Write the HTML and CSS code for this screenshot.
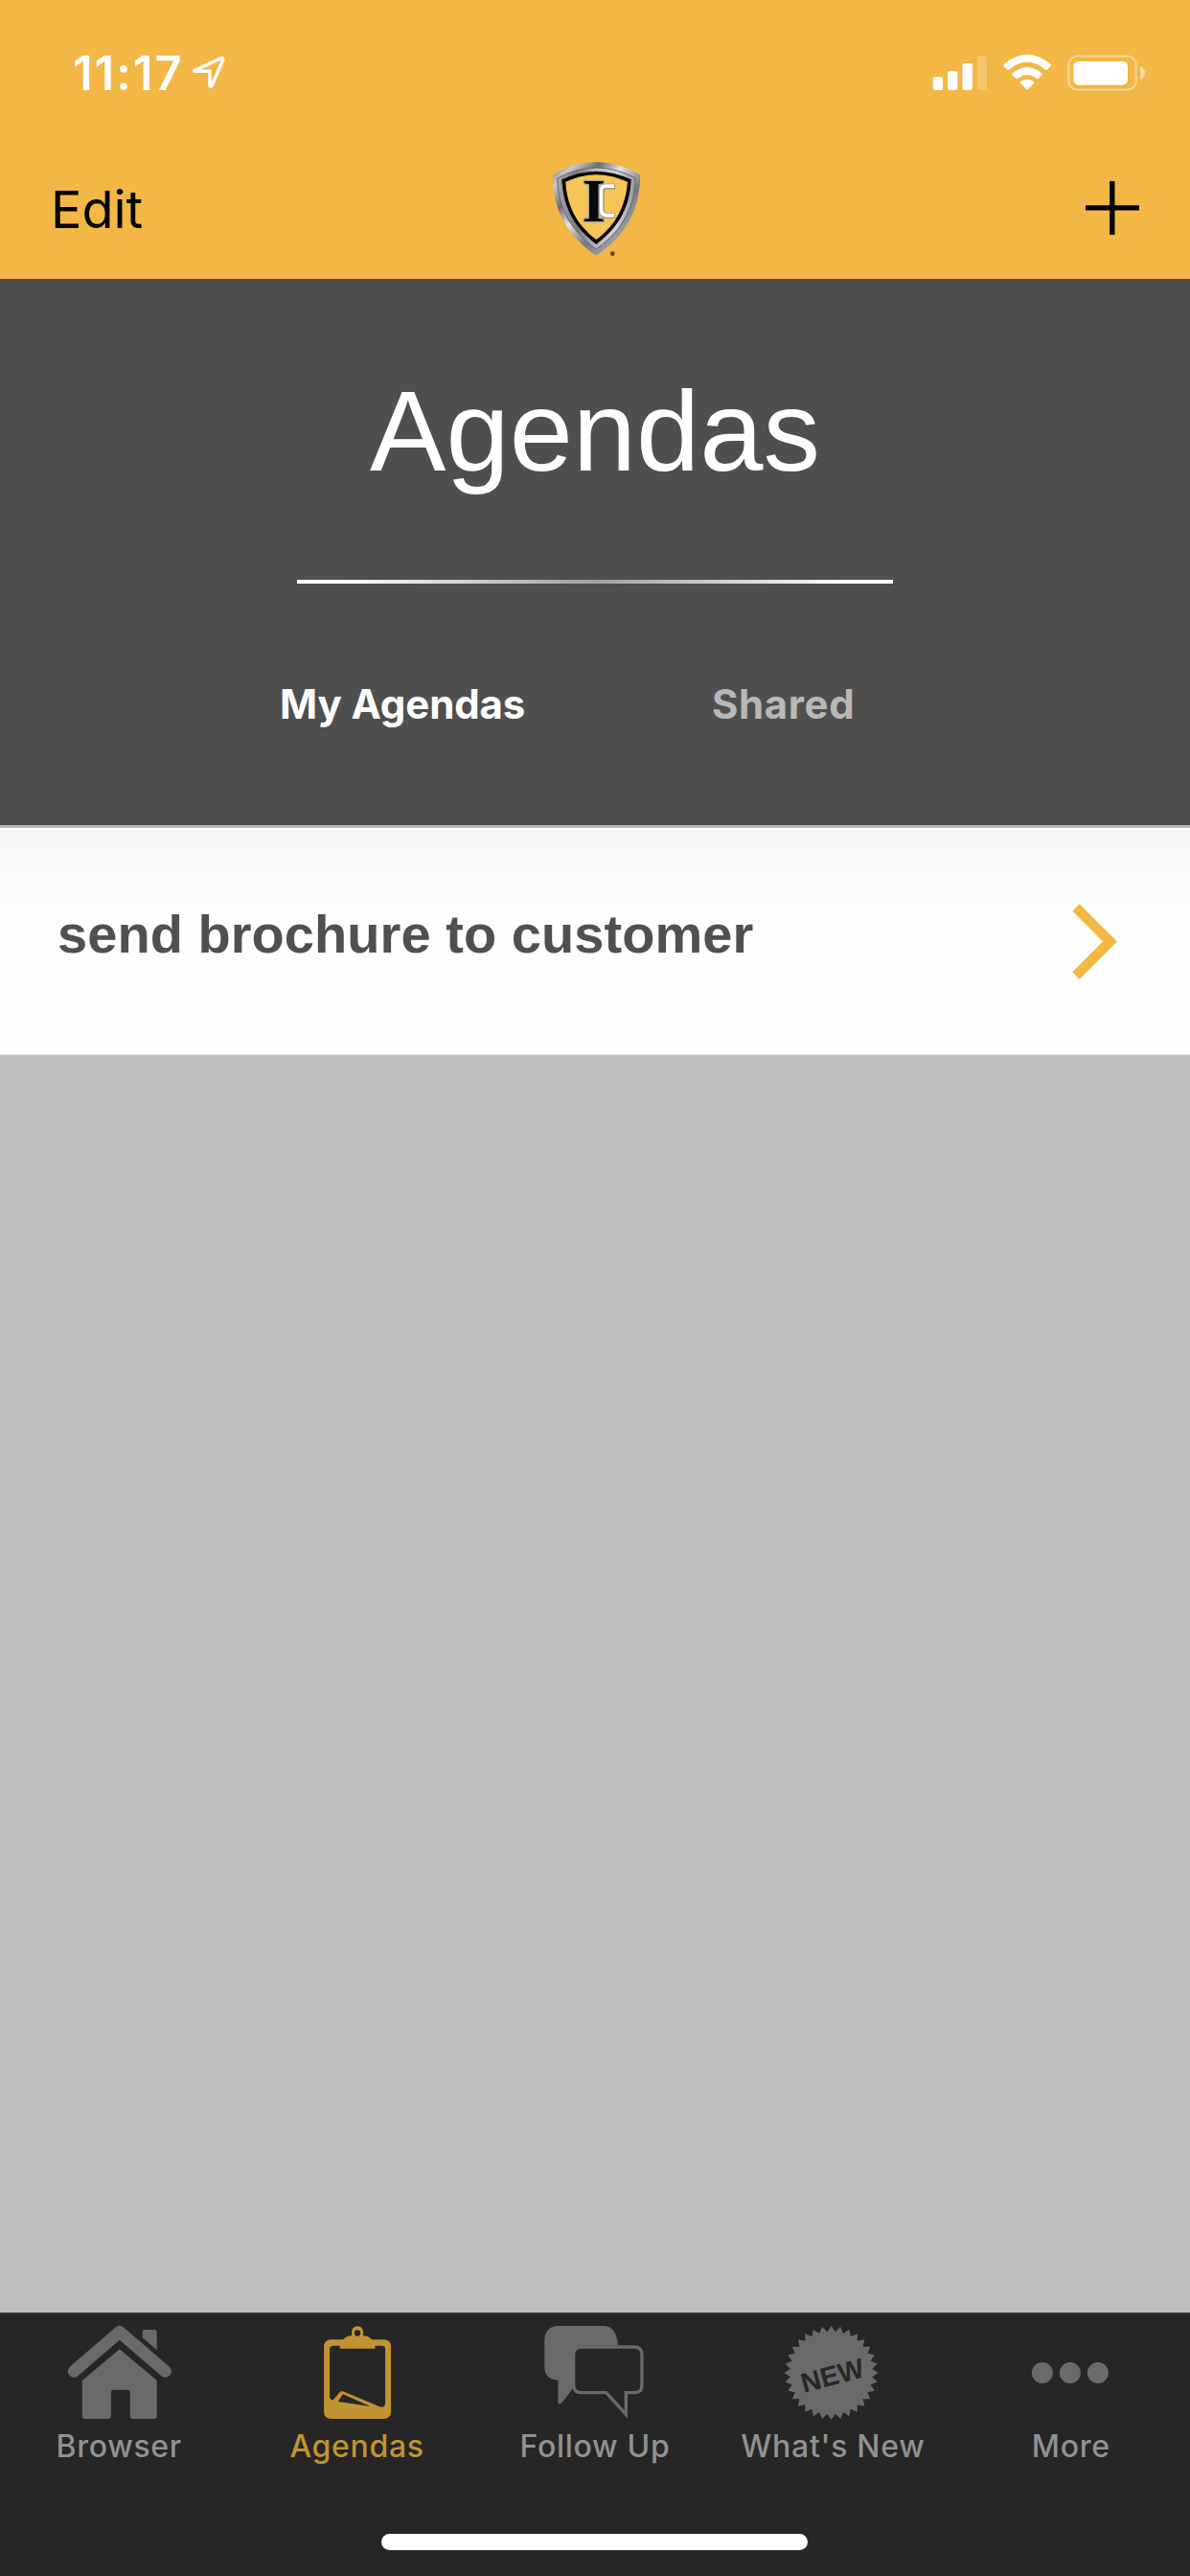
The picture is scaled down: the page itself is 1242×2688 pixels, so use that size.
FILE: index.html
```html
<!DOCTYPE html>
<html lang="en">
<head>
<meta charset="utf-8">
<title>Agendas</title>
<link rel="stylesheet" href="styles.css">
</head>
<body>
<div class="app">
  <header class="top">
    <div class="status">
      <div class="status-left">
        <span class="time">11:17</span>
        <svg class="location" width="34" height="36" viewBox="603 174 102 108"><path d="M609 221L693 182Q699 181 698 188L663 269Q659 274 657 268V223H612Q606 223 609 221Z" fill="none" stroke="#fff" stroke-width="10.500" stroke-linejoin="round"/></svg>
      </div>
      <div class="status-right">
        <svg width="57" height="40" viewBox="159 108 171 120" fill="#fff"><rect x="161" y="181" width="31" height="41" rx="8"/><rect x="207" y="162" width="31" height="60" rx="8"/><rect x="253" y="138" width="32" height="84" rx="8"/><rect x="300" y="115" width="30" height="107" rx="8" opacity=".22"/></svg>
        <svg class="wifi" width="52" height="40" viewBox="378 108 156 120" fill="#fff"><path d="M382 142Q456 79 530 142Q532 145 530 147L518 158Q516 160 513 158Q456 111 399 158Q396 160 394 158L382 147Q380 145 382 142Z"/><path d="M409 170Q456 130 503 170Q505 173 503 175L491 185Q488 188 485 185Q456 163 427 185Q424 188 421 185L409 175Q407 173 409 170Z"/><path d="M435 196Q456 181 477 196Q479 199 477 201L458 220Q456 222 454 220L435 201Q433 199 435 196Z"/></svg>
        <svg class="battery" width="83" height="40" viewBox="579 108 249 120" fill="#fff"><rect x="586" y="116" width="211" height="105" rx="27" fill="none" stroke="#fff" stroke-width="7" opacity=".4"/><rect x="601" y="132" width="170" height="74" rx="16"/><path d="M810 147Q825 154 825 168Q825 182 810 189Z" opacity=".5"/></svg>
      </div>
    </div>
    <nav class="nav">
      <a class="edit">Edit</a>
      <svg class="logo" width="100" height="102" viewBox="63 54 300 306">
        <defs>
          <linearGradient id="steel" x1="0" y1="0" x2="1" y2="1"><stop offset="0" stop-color="#77777d"/><stop offset=".14" stop-color="#c9c9ce"/><stop offset=".28" stop-color="#6c6c73"/><stop offset=".42" stop-color="#e2e2e6"/><stop offset=".62" stop-color="#77777e"/><stop offset=".8" stop-color="#a3a3aa"/><stop offset="1" stop-color="#77777e"/></linearGradient>
          <linearGradient id="rim" x1="0" y1="0" x2="1" y2="0"><stop offset="0" stop-color="#a5a5ac"/><stop offset=".25" stop-color="#7a7a80"/><stop offset=".5" stop-color="#b9b9bf"/><stop offset=".75" stop-color="#d3d3d8"/><stop offset="1" stop-color="#96969d"/></linearGradient>
        </defs>
        <path d="M78 98Q140 58 214 57Q290 58 351 97C353 190 316 283 214 350C112 283 76 190 78 98Z" fill="url(#steel)"/>
        <path d="M92 108Q150 76 214 75Q280 76 337 108C334 190 304 265 214 330C124 265 94 190 92 108Z" fill="url(#rim)" stroke="#66666c" stroke-width="3"/>
        <path d="M106 112Q160 87 214 86Q270 87 323 112C320 190 290 258 214 315C138 258 110 190 106 112Z" fill="#060606"/>
        <path d="M118 119Q166 98 214 97Q264 98 312 119C306 190 280 250 214 300C148 250 122 190 118 119Z" fill="#f5c557"/>
        <path d="M272 134H244Q230 134 230 150V206Q230 224 246 225H272" fill="none" stroke="#8d877d" stroke-width="17"/>
        <path d="M270 133H243Q229 133 229 149V205Q229 222 245 224H270" fill="none" stroke="#fff" stroke-width="12"/>
        <text x="206" y="242" text-anchor="middle" class="logo-letter" textLength="72" lengthAdjust="spacingAndGlyphs">I</text>
        <circle cx="265" cy="344" r="7" fill="#5c451c"/>
      </svg>
      <svg class="plus" width="58" height="58" viewBox="636 504 174 174"><path d="M639 590.5H807M722.5 507V675" stroke="#000" stroke-width="16"/></svg>
    </nav>
  </header>
  <section class="hero">
    <h1>Agendas</h1>
    <div class="rule"></div>
    <div class="segments">
      <a class="segment active">My Agendas</a>
      <a class="segment">Shared</a>
    </div>
  </section>
  <main class="list">
    <div class="row">
      <span class="row-title">send brochure to customer</span>
      <svg class="chevron" width="48" height="80" viewBox="1119 943 48 80"><path d="M1123 947L1158.500 982.500L1123 1018" fill="none" stroke="#f3b745" stroke-width="10.500"/></svg>
    </div>
  </main>
  <footer class="tabs">
    <a class="tab">
      <svg width="110" height="99" viewBox="207.600 108 330 297"><path d="M232 253L375 130L518 253" fill="none" stroke="currentColor" stroke-width="38" stroke-linecap="round" stroke-linejoin="round"/><path d="M447 130Q447 123 454 123H485Q492 123 492 130V187L447 148Z"/><path d="M375 184L492 282V393Q492 402 483 402H417Q408 402 408 393V321Q408 311 398 311H358Q348 311 348 321V393Q348 402 339 402H267Q258 402 258 393V282Z"/></svg>
      <span>Browser</span>
    </a>
    <a class="tab selected">
      <svg width="110" height="99" viewBox="952.800 108 330 297"><path fill-rule="evenodd" d="M1036 154H1073Q1084 142 1100 142Q1097 112 1118 112Q1139 112 1136 142Q1153 142 1163 154H1200Q1223 154 1223 177V379Q1223 402 1200 402H1036Q1013 402 1013 379V177Q1013 154 1036 154ZM1118 124A9.500 9.500 0 1 0 1118 143A9.500 9.500 0 1 0 1118 124ZM1042 173Q1031 173 1031 184V336Q1034 344 1043 342L1061 320Q1068 313 1078 318L1180 361Q1203 372 1205 354V184Q1205 173 1194 173H1173V182H1063V173ZM1073 325L1057 348L1158 363Z"/></svg>
      <span>Agendas</span>
    </a>
    <a class="tab">
      <svg width="110" height="99" viewBox="258 108 330 297"><path d="M307 111H453Q490 113 495 172H380Q354 172 354 199V294Q354 304 350 311L320 351Q307 361 307 348V281Q265 278 265 240V154Q268 112 307 111Z"/><path d="M380 177H546Q570 177 570 201V296Q570 320 546 320H520V388L458 320H380Q356 320 356 296V201Q356 177 380 177Z" fill="none" stroke="currentColor" stroke-width="10"/></svg>
      <span>Follow Up</span>
    </a>
    <a class="tab">
      <svg width="110" height="99" viewBox="1003.200 108 330 297">
        <defs><path id="burst" d="M0-147L135.800 56.300L-103.900 103.900L-56.300-135.800L147 0L-56.300 135.800L-103.900-103.900L135.800-56.300L0 147L-135.800-56.300L103.900-103.900L56.300 135.800L-147 0L56.300-135.800L103.900 103.900L-135.800 56.300Z"/></defs>
        <g transform="translate(1164 258)"><use href="#burst"/><use href="#burst" transform="rotate(11.250)"/></g>
        <text class="new" transform="translate(1175 295) rotate(-15)" text-anchor="middle" textLength="200" lengthAdjust="spacingAndGlyphs">NEW</text>
      </svg>
      <span>What's New</span>
    </a>
    <a class="tab">
      <svg width="110" height="99" viewBox="368.400 108 330 297"><circle cx="443" cy="258" r="33"/><circle cx="530" cy="258" r="33"/><circle cx="617" cy="258" r="33"/></svg>
      <span>More</span>
    </a>
    <div class="home-bar"></div>
  </footer>
</div>
</body>
</html>
```
FILE: styles.css
```css
* { box-sizing: border-box; margin: 0; }
body { background: #bdbdbd; font-family: Inter, "Liberation Sans", sans-serif; }
svg { display: block; flex: none; }
.app { width: 1242px; height: 2688px; display: flex; flex-direction: column; }

.top { height: 291px; background: #f3b745; }
.status { height: 132px; display: flex; justify-content: space-between; padding: 56px 46px 0 76px; }
.status-left, .status-right { display: flex; align-items: flex-start; }
.time { color: #fff; font-size: 49px; font-weight: 600; line-height: 41px; letter-spacing: 1.9px; }
.location { margin: 2px 0 0 9px; }
.wifi { margin-left: 16px; }
.battery { margin-left: 15px; }
.nav { height: 159px; display: grid; grid-template-columns: 1fr auto 1fr; align-items: center; padding: 15px 52px 0 53px; }
.edit { color: #000; font-size: 54px; line-height: 60px; letter-spacing: 0; }
.plus { justify-self: end; margin-top: -4px; }
.logo-letter { font: bold 192px "Liberation Serif", serif; fill: #080808; stroke: #a9a59c; stroke-width: 8px; paint-order: stroke; }

.hero { height: 570px; background: #4f4f4f; display: flex; flex-direction: column; align-items: center; }
.hero h1 { margin-top: 89px; color: #fff; font: 400 119px/140px "Liberation Sans", sans-serif; }
.rule { width: 622px; height: 4px; margin-top: 85px; background: linear-gradient(90deg, #fff 0%, #fff 8%, #a0a0a0 50%, #fff 92%, #fff 100%); }
.segments { width: 100%; margin-top: 101px; display: grid; grid-template-columns: 451px 1fr; padding-left: 292px; }
.segment { color: #b8b8b8; font-size: 42px; font-weight: 700; line-height: 50px; letter-spacing: .6px; }
.segment.active { color: #fff; letter-spacing: -.1px; }

.list { flex: 1; border-top: 3px solid #bbb; }
.row { height: 237px; display: flex; justify-content: space-between; padding: 77px 75px 0 60px; border-top: 2px solid #fff; border-bottom: 1px solid #ddd; background: linear-gradient(#f6f6f6, #fdfdfd 80px, #fefefe 85px); }
.row-title { margin-top: -1px; color: #505050; font: bold 56px/66px "Liberation Sans", sans-serif; letter-spacing: .05px; }

.tabs { height: 275px; background: #262626; border-top: 1px solid #444; display: grid; grid-template-columns: repeat(5, 1fr); grid-template-rows: 1fr auto; padding-top: 12px; }
.tab { display: flex; flex-direction: column; align-items: center; color: #929292; font-size: 32px; font-weight: 500; line-height: 40px; white-space: nowrap; }
.tab svg { color: #6a6a6a; fill: currentColor; }
.tab span { margin-top: 8px; letter-spacing: .7px; }
.tab.selected, .tab.selected svg { color: #c19332; }
.new { font: bold 86px "Liberation Sans", sans-serif; fill: #262626; }
.home-bar { grid-column: 1 / -1; justify-self: center; width: 445px; height: 17px; margin-bottom: 27px; border-radius: 9px; background: #fff; }
```
